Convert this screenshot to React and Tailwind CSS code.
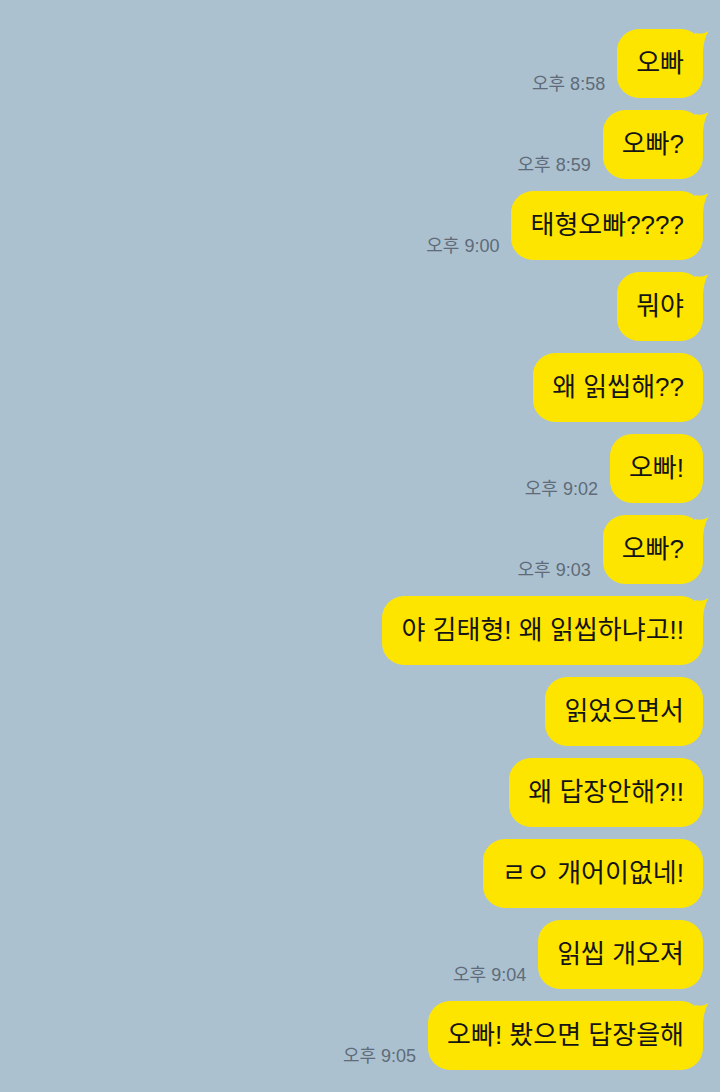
import React from 'react';

const messages = [
  { text: '오빠', time: '오후 8:58', tail: true },
  { text: '오빠?', time: '오후 8:59', tail: true },
  { text: '태형오빠????', time: '오후 9:00', tail: true },
  { text: '뭐야', tail: true },
  { text: '왜 읽씹해??' },
  { text: '오빠!', time: '오후 9:02' },
  { text: '오빠?', time: '오후 9:03', tail: true },
  { text: '야 김태형! 왜 읽씹하냐고!!', tail: true },
  { text: '읽었으면서' },
  { text: '왜 답장안해?!!' },
  { text: 'ㄹㅇ 개어이없네!' },
  { text: '읽씹 개오져', time: '오후 9:04' },
  { text: '오빠! 봤으면 답장을해', time: '오후 9:05', tail: true },
];

const Tail = () => (
  <svg
    className="absolute right-[-6px] top-[2px]"
    width="14"
    height="20"
    viewBox="0 0 14 20"
  >
    <path d="M0 2 Q8 4 13.5 0 Q9 7 8 20 L0 20 Z" fill="#fee500" />
  </svg>
);

const Bubble = ({ text, time, tail }) => (
  <div className="flex items-end gap-[12px]">
    {time && (
      <span className="mb-[4px] text-[18px] leading-[20px] text-[#5f6b78] whitespace-nowrap">
        {time}
      </span>
    )}
    <div className="relative">
      {tail && <Tail />}
      <div className="relative h-[69px] flex items-center px-[19px] rounded-[22px] bg-[#fee500] text-[26px] text-[#141414] whitespace-nowrap">
        {text}
      </div>
    </div>
  </div>
);

export default function App() {
  return (
    <div
      className="w-[720px] h-[1092px] overflow-hidden bg-[#abc1d0] flex flex-col items-end gap-3 pt-[29px] pr-[17px]"
      style={{ fontFamily: '"Liberation Sans", "Noto Sans CJK KR", sans-serif' }}
    >
      {messages.map((m, i) => (
        <Bubble key={i} {...m} />
      ))}
    </div>
  );
}
